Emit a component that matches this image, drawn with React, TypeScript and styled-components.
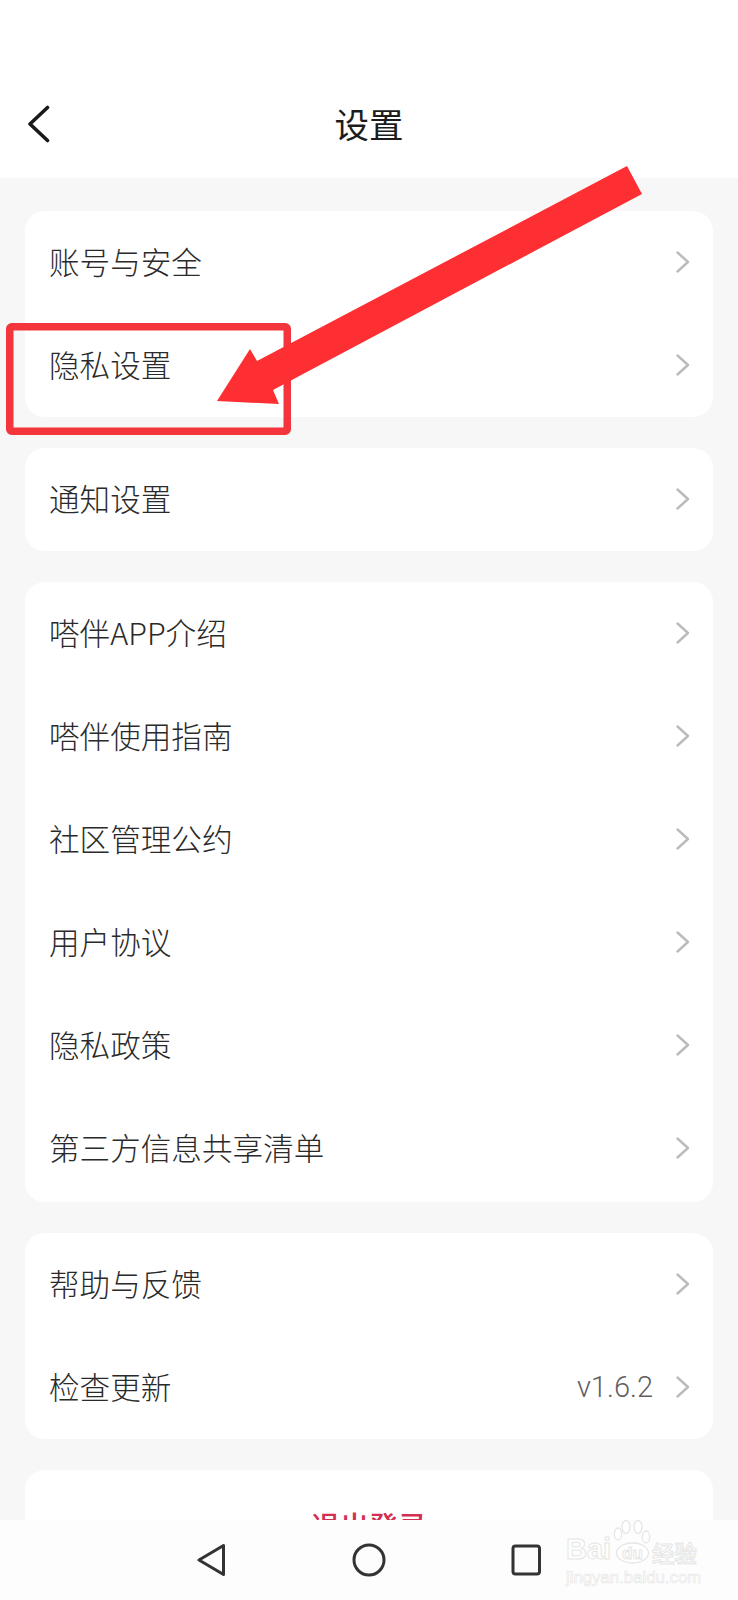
import React from "react";
import styled, { createGlobalStyle } from "styled-components";

const Global = createGlobalStyle`
  html, body { margin: 0; padding: 0; background: #f7f7f7; }
  body { font-family: "Noto Sans CJK SC", "Noto Sans", sans-serif; }
  * { box-sizing: border-box; }
`;

const Page = styled.div`
  position: relative;
  width: 738px;
  height: 1600px;
  overflow: hidden;
  background: #f7f7f7;
`;

const Header = styled.header`
  height: 178px;
  background: #fff;
  padding: 70px 27px 0;
  display: grid;
  grid-template-columns: 40px 1fr 40px;
  align-items: center;
  grid-template-rows: 108px;
`;

const BackIcon = styled.svg`
  width: 24px;
  height: 38px;
  display: block;
`;

const Title = styled.h1`
  margin: 0;
  padding-bottom: 2px;
  text-align: center;
  font-size: 34.5px;
  font-weight: 400;
  color: #1c1c1c;
  line-height: 1;
`;

const List = styled.main`
  padding: 33px 25px 0;
  display: flex;
  flex-direction: column;
  gap: 31px;
`;

const Card = styled.section<{ $extra?: number }>`
  background: #fff;
  border-radius: 20px;
  padding-bottom: ${(p) => p.$extra ?? 0}px;
`;

const RowBox = styled.div`
  height: 103px;
  padding: 0 22px 1px 24px;
  display: flex;
  align-items: center;
`;

const Label = styled.span`
  flex: 1;
  padding-bottom: 1px;
  font-size: 30.6px;
  font-weight: 300;
  color: #2a2a2a;
  line-height: 1;
`;

const Version = styled.span`
  font-family: "Roboto", "Noto Sans", sans-serif;
  font-size: 29px;
  font-weight: 300;
  color: #5f5f5f;
  margin-right: 22px;
`;

const Chevron = styled.svg`
  width: 16px;
  height: 24px;
  display: block;
`;

const Logout = styled.div`
  height: 103px;
  padding-top: 6px;
  display: flex;
  align-items: center;
  justify-content: center;
  font-size: 29px;
  font-weight: 500;
  color: #d22f52;
`;

const NavBar = styled.nav`
  position: absolute;
  left: 0;
  right: 0;
  bottom: 0;
  height: 80px;
  background: #fdfdfd;
`;

const NavIcons = styled.svg`
  display: block;
  width: 738px;
  height: 80px;
`;

const Callout = styled.svg`
  position: absolute;
  left: 0;
  top: 0;
  width: 738px;
  height: 480px;
  pointer-events: none;
`;

const Watermark = styled.div`
  position: absolute;
  left: 566px;
  top: 1520px;
  width: 136px;
  color: #fff;
  font-family: "Liberation Sans", sans-serif;
  line-height: 1;
  -webkit-text-stroke: 1px #e6e6e6;
  pointer-events: none;
`;

const WatermarkMain = styled.div`
  display: flex;
  align-items: flex-end;
  height: 44px;
  white-space: nowrap;
`;

const WatermarkBai = styled.span`
  font-size: 29px;
  font-weight: 700;
  width: 47px;
`;

const PawBox = styled.div`
  position: relative;
  width: 38px;
  height: 44px;
  flex: none;
`;

const Paw = styled.svg`
  display: block;
  width: 38px;
  height: 44px;
`;

const PawText = styled.span`
  position: absolute;
  left: 9px;
  top: 25px;
  font-size: 17px;
  font-weight: 700;
`;

const WatermarkCn = styled.span`
  font-family: "Noto Sans CJK SC", sans-serif;
  font-size: 22.5px;
  font-weight: 500;
  margin-left: 1px;
  padding-bottom: 1px;
`;

const WatermarkUrl = styled.div`
  margin-top: 6px;
  font-size: 16.8px;
  -webkit-text-stroke: 0.6px #e6e6e6;
  white-space: nowrap;
`;

const Row = ({ label, version }: { label: string; version?: string }) => (
  <RowBox>
    <Label>{label}</Label>
    {version && <Version>{version}</Version>}
    <Chevron viewBox="0 0 16 24" fill="none">
      <path d="M2.5 2.5 L13 12 L2.5 21.5" stroke="#bbb" strokeWidth="2.4" strokeLinecap="round" strokeLinejoin="round" />
    </Chevron>
  </RowBox>
);

const groups: { label: string; version?: string }[][] = [
  [{ label: "账号与安全" }, { label: "隐私设置" }],
  [{ label: "通知设置" }],
  [
    { label: "嗒伴APP介绍" },
    { label: "嗒伴使用指南" },
    { label: "社区管理公约" },
    { label: "用户协议" },
    { label: "隐私政策" },
    { label: "第三方信息共享清单" },
  ],
  [{ label: "帮助与反馈" }, { label: "检查更新", version: "v1.6.2" }],
];

export default function App() {
  return (
    <Page>
      <Global />
      <Header>
        <BackIcon viewBox="0 0 24 38" fill="none">
          <path d="M20.5 2.5 L3 19 L20.5 35.5" stroke="#1a1a1a" strokeWidth="3.6" strokeLinecap="round" strokeLinejoin="round" />
        </BackIcon>
        <Title>设置</Title>
      </Header>
      <List>
        {groups.map((rows, i) => (
          <Card key={i} $extra={rows.length === 6 ? 2 : 0}>
            {rows.map((r) => (
              <Row key={r.label} label={r.label} version={r.version} />
            ))}
          </Card>
        ))}
        <Card>
          <Logout>退出登录</Logout>
        </Card>
      </List>
      <NavBar>
        <NavIcons viewBox="0 0 738 80" fill="none" stroke="#333" strokeWidth="3" strokeLinejoin="round">
          <path d="M223.5 25.5 V54.5 L199 40 Z" />
          <ellipse cx="369" cy="40" rx="15" ry="15" />
          <rect x="513" y="26" width="26.5" height="28" rx="2.5" />
        </NavIcons>
      </NavBar>
      <Callout viewBox="0 0 738 480">
        <rect x="9.75" y="326.75" width="277.5" height="104.5" rx="2" fill="none" stroke="#f4353b" strokeWidth="7.5" />
        <polygon points="627,166 642,194 273,390 279,404 217,401 250,349 257,361" fill="#fd2f33" />
      </Callout>
      <Watermark>
        <WatermarkMain>
          <WatermarkBai>Bai</WatermarkBai>
          <PawBox>
            <Paw viewBox="0 0 38 44" fill="#fff" stroke="#e6e6e6" strokeWidth="1.3">
              <ellipse cx="5" cy="14" rx="3.6" ry="6" />
              <ellipse cx="13" cy="7" rx="4" ry="6.5" />
              <ellipse cx="25" cy="7" rx="4" ry="6.5" />
              <ellipse cx="33" cy="17" rx="3.6" ry="6" />
              <ellipse cx="19.5" cy="33" rx="16" ry="10" />
            </Paw>
            <PawText>du</PawText>
          </PawBox>
          <WatermarkCn>经验</WatermarkCn>
        </WatermarkMain>
        <WatermarkUrl>jingyan.baidu.com</WatermarkUrl>
      </Watermark>
    </Page>
  );
}
